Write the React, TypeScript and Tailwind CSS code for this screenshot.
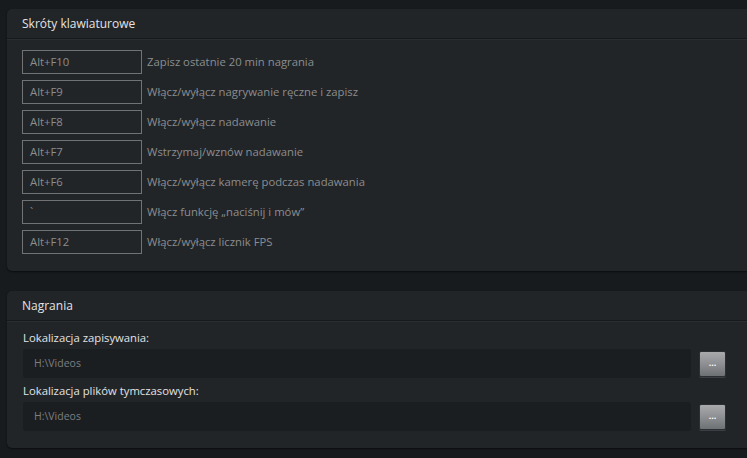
import React from "react";

const shortcuts: [string, string][] = [
  ["Alt+F10", "Zapisz ostatnie 20 min nagrania"],
  ["Alt+F9", "Włącz/wyłącz nagrywanie ręczne i zapisz"],
  ["Alt+F8", "Włącz/wyłącz nadawanie"],
  ["Alt+F7", "Wstrzymaj/wznów nadawanie"],
  ["Alt+F6", "Włącz/wyłącz kamerę podczas nadawania"],
  ["`", "Włącz funkcję „naciśnij i mów”"],
  ["Alt+F12", "Włącz/wyłącz licznik FPS"],
];

function PathRow({ label, value }: { label: string; value: string }) {
  return (
    <div className="flex flex-col">
      <div className="h-[21px] flex items-center text-[11.3px] text-[#e2e3e4]">{label}</div>
      <div className="flex items-center">
        <div className="w-[668px] h-[29px] rounded-[3px] bg-[#1b1e21] flex items-center pl-[11px] text-[10.5px] text-[#7b7e80]">
          {value}
        </div>
        <div className="ml-[8px] w-[27px] h-[26px] rounded-[2px] border border-[#2c2f32] bg-gradient-to-b from-[#a8aaac] via-[#8d8f92] to-[#6e7174] shadow-[0_1px_0_#3a3f45] flex items-center justify-center">
          <span className="text-white text-[9px] font-bold leading-none -mt-[2px]">...</span>
        </div>
      </div>
    </div>
  );
}

export default function App() {
  return (
    <div
      className="w-[747px] h-[458px] bg-[#181b1e] overflow-hidden pl-[7px] pt-[9px]"
      style={{ fontFamily: '"Open Sans", "Noto Sans", sans-serif' }}
    >
      <div className="w-[760px] h-[262px] rounded-[5px] bg-[#222528] shadow-[0_1px_2px_rgba(0,0,0,0.6)] flex flex-col">
        <div className="h-[30px] flex items-center pl-[15px] text-[12px] text-[#e2e3e4] border-b border-[#16181a] shadow-[0_1px_0_#2a2d31]">
          Skróty klawiaturowe
        </div>
        <div className="flex flex-col gap-[6px] pl-[15px] pt-[11px]">
          {shortcuts.map(([k, d]) => (
            <div key={d} className="flex items-center h-[24px]">
              <div className="w-[120px] h-[24px] border border-[#707274] flex items-center pl-[7px] text-[11.3px] text-[#8b8d8f]">
                {k}
              </div>
              <div className="ml-[5px] text-[11.3px] text-[#8b8d8f]">{d}</div>
            </div>
          ))}
        </div>
      </div>
      <div className="mt-[20px] w-[760px] h-[157px] rounded-[5px] bg-[#222528] shadow-[0_1px_2px_rgba(0,0,0,0.6)] flex flex-col">
        <div className="h-[30px] flex items-center pl-[15px] text-[12px] text-[#e2e3e4] border-b border-[#16181a] shadow-[0_1px_0_#2a2d31]">
          Nagrania
        </div>
        <div className="flex flex-col pl-[16px] pt-[7px] gap-[3px]">
          <PathRow label="Lokalizacja zapisywania:" value="H:\Videos" />
          <PathRow label="Lokalizacja plików tymczasowych:" value="H:\Videos" />
        </div>
      </div>
    </div>
  );
}
